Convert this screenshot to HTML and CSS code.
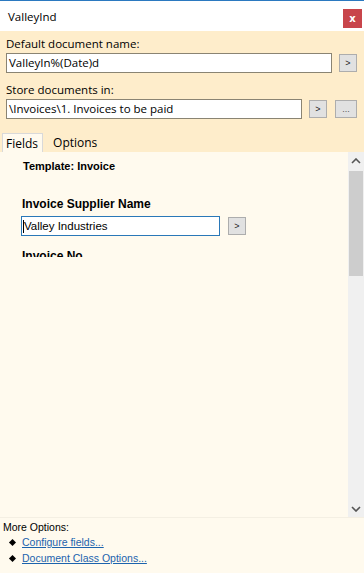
FILE: index.html
```html
<!DOCTYPE html>
<html>
<head>
<meta charset="utf-8">
<link rel="stylesheet" href="styles.css">
</head>
<body>
<div class="window">
  <div class="titlebar">
    <span class="title">ValleyInd</span>
    <span class="close">x</span>
  </div>
  <div class="header">
    <div class="label">Default document name:</div>
    <div class="row">
      <div class="input w1">ValleyIn%(Date)d</div>
      <span class="btn">&gt;</span>
    </div>
    <div class="label l2">Store documents in:</div>
    <div class="row">
      <div class="input w2">\Invoices\1. Invoices to be paid</div>
      <span class="btn b2">&gt;</span>
      <span class="btn dots">...</span>
    </div>
    <div class="tabs">
      <span class="tab active">Fields</span>
      <span class="tab">Options</span>
    </div>
  </div>
  <div class="content">
    <div class="fields">
      <div class="template">Template: Invoice</div>
      <div class="fname">Invoice Supplier Name</div>
      <div class="frow">
        <div class="finput"><span class="caret"></span>Valley Industries</div>
        <span class="btn fbtn">&gt;</span>
      </div>
      <div class="fname next">Invoice No</div>
    </div>
    <div class="scrollbar">
      <div class="arrow">
        <svg width="10" height="6" viewBox="0 0 10 6"><path d="M1 5 L5 1 L9 5" fill="none" stroke="#555" stroke-width="1.6"/></svg>
      </div>
      <div class="thumb"></div>
      <div class="track"></div>
      <div class="arrow">
        <svg width="10" height="6" viewBox="0 0 10 6"><path d="M1 1 L5 5 L9 1" fill="none" stroke="#555" stroke-width="1.6"/></svg>
      </div>
    </div>
  </div>
  <div class="footer">
    <div class="more">More Options:</div>
    <div class="link"><span class="diamond"></span><a href="#">Configure fields...</a></div>
    <div class="link"><span class="diamond"></span><a href="#">Document Class Options...</a></div>
  </div>
</div>
</body>
</html>
```
FILE: styles.css
```css
html, body {
  margin: 0;
  padding: 0;
  background: #fffaee;
}
.window {
  width: 364px;
  height: 573px;
  border-top: 1px solid #2b79c0;
  box-sizing: border-box;
  display: flex;
  flex-direction: column;
  font-family: "Open Sans", "Noto Sans", sans-serif;
  font-size: 11px;
  color: #000;
}
.titlebar {
  height: 30px;
  background: #fff;
  display: flex;
  align-items: center;
  justify-content: space-between;
  padding-left: 8px;
  padding-right: 2px;
}
.title {
  font-size: 11.5px;
}
.close {
  width: 19px;
  height: 19px;
  margin-top: 4px;
  background: #c8454b;
  color: #fff;
  font-family: "DejaVu Sans", sans-serif;
  font-weight: bold;
  font-size: 10px;
  display: flex;
  align-items: center;
  justify-content: center;
}
.header {
  background: #feedcb;
  padding: 5px 0 0 0;
  display: flex;
  flex-direction: column;
}
.label {
  padding-left: 6px;
  line-height: 16px;
  height: 16px;
  margin-bottom: 1px;
  font-size: 11.5px;
}
.label.l2 {
  margin-top: 9px;
}
.row {
  display: flex;
  align-items: center;
  padding-left: 6px;
  height: 20px;
}
.input {
  box-sizing: border-box;
  height: 20px;
  background: #fff;
  border: 1px solid #8a8473;
  padding-left: 2px;
  line-height: 18px;
  font-size: 11.5px;
  white-space: nowrap;
  overflow: hidden;
}
.w1 { width: 326px; }
.w2 { width: 296px; }
.btn {
  box-sizing: border-box;
  width: 18px;
  height: 18px;
  background: #e1e1e1;
  border: 1px solid #adadad;
  display: flex;
  align-items: center;
  justify-content: center;
  font-family: "Liberation Sans", sans-serif;
  font-size: 9px;
  color: #222;
  margin-left: 7px;
}
.b2 { margin-left: 7px; }
.dots {
  width: 22px;
  margin-left: 8px;
  align-items: flex-end;
  padding-bottom: 3px;
  color: #555;
}
.tabs {
  margin-top: 14px;
  display: flex;
  height: 19px;
  padding-left: 2px;
}
.tab {
  display: flex;
  align-items: center;
  padding: 0 6px 0 4px;
  font-size: 12px;
  line-height: 19px;
}
.tab.active {
  background: #fffaee;
  border: 1px solid #d9d9d9;
  border-bottom: none;
  padding: 0 4px 0 3px;
  margin-right: 6px;
}
.content {
  height: 365px;
  display: flex;
  background: #fffaee;
  border-bottom: 1px solid #f4efe3;
}
.fields {
  flex: 1;
  height: 105px;
  overflow: hidden;
  padding-left: 21px;
  font-family: "Liberation Sans", Arial, sans-serif;
}
.template {
  font-weight: bold;
  font-size: 11px;
  margin-top: 8px;
  padding-left: 2px;
  line-height: 13px;
}
.fname {
  font-weight: bold;
  font-size: 12px;
  margin-top: 24px;
  padding-left: 1px;
  line-height: 15px;
}
.fname.next {
  margin-top: 13px;
}
.frow {
  display: flex;
  align-items: center;
  margin-top: 4px;
}
.finput {
  box-sizing: border-box;
  width: 199px;
  height: 20px;
  border: 1px solid #2a78b8;
  background: #fff;
  display: flex;
  align-items: center;
  padding-left: 1px;
  font-size: 11.5px;
}
.caret {
  width: 1px;
  height: 13px;
  background: #000;
  margin-right: 0;
}
.fbtn {
  margin-left: 8px;
}
.scrollbar {
  width: 16px;
  background: #f0f0f0;
  display: flex;
  flex-direction: column;
}
.arrow {
  height: 17px;
  display: flex;
  align-items: center;
  justify-content: center;
}
.thumb {
  height: 105px;
  margin: 2px 1px 0 1px;
  background: #cdcdcd;
}
.track {
  flex: 1;
}
.footer {
  flex: 1;
  background: #fffaee;
  font-family: "Liberation Sans", Arial, sans-serif;
  font-size: 10.5px;
  padding-left: 3px;
  padding-top: 2px;
}
.more {
  line-height: 14px;
}
.link {
  display: flex;
  align-items: center;
  line-height: 16px;
  padding-left: 7px;
}
.diamond {
  width: 5px;
  height: 5px;
  background: #000;
  transform: rotate(45deg);
  margin-right: 7px;
}
.link a {
  color: #1c63ad;
  text-decoration: underline;
}
```
